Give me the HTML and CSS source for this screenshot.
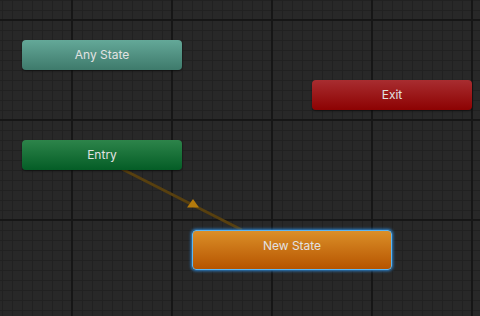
FILE: index.html
```html
<!DOCTYPE html>
<html lang="en">
<head>
    <meta charset="UTF-8">
    <title>Animator</title>
    <link rel="stylesheet" href="styles.css">
</head>
<body>
    <div class="graph">
        <svg class="links" width="480" height="316" viewBox="0 0 480 316">
            <line x1="122" y1="169" x2="242" y2="230" stroke="#58400f" stroke-width="3"/>
            <polygon points="193,199 199,207.5 187,207.5" fill="#b37a0c"/>
        </svg>

        <div class="node any" style="left:22px; top:40px;">Any State</div>
        <div class="node exit" style="left:312px; top:80px;">Exit</div>
        <div class="node entry" style="left:22px; top:140px;">Entry</div>
        <div class="node state selected" style="left:192px; top:230px;">New State</div>
    </div>
</body>
</html>
```

FILE: styles.css
```css
/* animator graph */
body {
    margin: 0;
    background-color: #282828;
    font-family: Inter, "Noto Sans", sans-serif;
}
.graph {
    position: relative;
    width: 480px;
    height: 316px;
    overflow: hidden;
    background-color: #282828;
    background-image:
        linear-gradient(to right, #161616 2px, transparent 2px),
        linear-gradient(to bottom, #161616 2px, transparent 2px),
        linear-gradient(to right, #212121 1px, transparent 1px),
        linear-gradient(to bottom, #212121 1px, transparent 1px);
    background-size: 100px 100px, 100px 100px, 10px 10px, 10px 10px;
    background-position: 71px 0, 0 19px, 2px 0, 0 0;
}
.links {
    position: absolute;
    left: 0;
    top: 0;
}
.node {
    position: absolute;
    width: 160px;
    height: 30px;
    box-sizing: border-box;
    border-radius: 4px;
    color: #e2e2e2;
    font-size: 12px;
    line-height: 29px;
    text-align: center;
    box-shadow: 0 1px 2px rgba(0,0,0,0.5);
}
.node.any {
    background: linear-gradient(#64a898, #3e7a6b);
}
.node.exit {
    background: linear-gradient(#a82d30, #8d0202);
}
.node.entry {
    background: linear-gradient(#2d844a, #045d26);
}
.node.state {
    width: 200px;
    height: 40px;
    line-height: 29px;
    background: linear-gradient(#db8f28, #b65400);
}
.node.selected {
    border: 1px solid #5db6f2;
    box-shadow: 0 0 3px 1px #2c84d0;
}
```
